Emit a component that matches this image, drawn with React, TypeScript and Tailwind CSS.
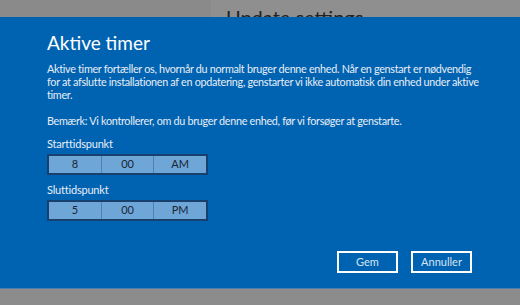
export default function App() {
  const font = { fontFamily: '"Segoe UI", Lato, "Noto Sans", sans-serif' };
  return (
    <div className="flex h-[305px] w-[520px] flex-col overflow-hidden bg-[#8c8c8c]" style={font}>
      <div className="flex h-[17px] shrink-0 overflow-hidden">
        <div className="w-[211px] bg-[#8a8a8a]" />
        <div className="flex-1 bg-[#8f8f8f] pl-[15px] pt-[5px]">
          <div className="text-[20px] leading-[24px] text-[#222]">Update settings</div>
        </div>
      </div>
      <div className="flex h-[271px] shrink-0 flex-col bg-[#0063b1] pl-[47px] pr-[40px] pt-[13px] text-white">
        <h1 className="text-[19px] font-normal leading-[26px]">Aktive timer</h1>
        <p className="mt-[6px] text-[10.8px] leading-[13px] tracking-[-0.3px] text-[#e8eef6]">
          Aktive timer fortæller os, hvornår du normalt bruger denne enhed. Når en genstart er nødvendig for at afslutte installationen af en opdatering, genstarter vi ikke automatisk din enhed under aktive timer.
        </p>
        <p className="mt-[13px] text-[10.8px] leading-[13px] tracking-[-0.3px] text-[#e8eef6]">
          Bemærk: Vi kontrollerer, om du bruger denne enhed, før vi forsøger at genstarte.
        </p>
        <TimeField label="Starttidspunkt" values={["8", "00", "AM"]} className="mt-[10px]" />
        <TimeField label="Sluttidspunkt" values={["5", "00", "PM"]} className="mt-[8px]" />
        <div className="mt-auto mb-[15px] mr-[8px] flex justify-end gap-[13px]">
          <button className="h-[22px] w-[61px] border-2 border-white text-[11px] text-[#d8e4f2]">Gem</button>
          <button className="h-[22px] w-[61px] border-2 border-white text-[11px] text-[#d8e4f2]">Annuller</button>
        </div>
      </div>
      <div className="flex-1 border-t border-[#4b7fae] bg-[#8c8c8c]" />
    </div>
  );
}

function TimeField({ label, values, className }: { label: string; values: string[]; className?: string }) {
  return (
    <div className={className}>
      <div className="text-[11px] leading-[14px] tracking-[-0.2px] text-[#e8eef6]">{label}</div>
      <div className="mt-[3px] flex h-[21px] w-[161px] border-2 border-[#17406f] bg-[#6ea6d7]">
        {values.map((v, i) => (
          <div
            key={i}
            className={`flex flex-1 items-center justify-center text-[11px] text-[#1a2533] ${i > 0 ? "border-l border-[#4d80b3]" : ""}`}
          >
            {v}
          </div>
        ))}
      </div>
    </div>
  );
}
